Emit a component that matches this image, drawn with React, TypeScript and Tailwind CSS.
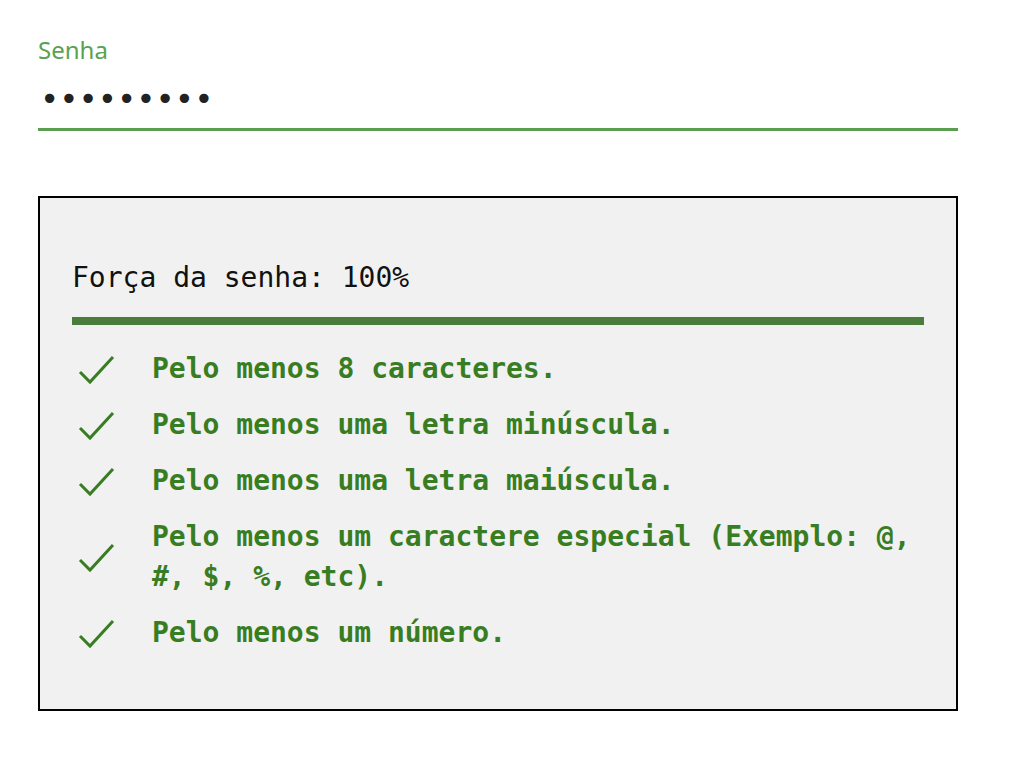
const requirements = [
  'Pelo menos 8 caracteres.',
  'Pelo menos uma letra minúscula.',
  'Pelo menos uma letra maiúscula.',
  'Pelo menos um caractere especial (Exemplo: @, #, $, %, etc).',
  'Pelo menos um número.',
];

function CheckIcon() {
  return (
    <svg width="40" height="40" viewBox="0 0 40 40" fill="none" className="shrink-0">
      <polyline points="4,23 14,33 37,8" stroke="#387d22" strokeWidth="3" />
    </svg>
  );
}

export default function App() {
  return (
    <div className="min-h-screen bg-white">
      <div className="ml-[38px] w-[920px] pt-[34px]">
        <label className="block text-[24px] leading-[32px] text-[#5aa150] font-['Noto_Sans',sans-serif]">
          Senha
        </label>
        <div className="mt-[13px] border-b-[3px] border-[#5a9f4f] pb-[9px] pl-[2px]">
          <span className="block text-[32px] leading-[40px] text-[#222] font-['DejaVu_Sans_Mono',monospace]">
            •••••••••
          </span>
        </div>

        <div className="mt-[65px] border-2 border-black bg-[#f1f1f1] px-[32px] pt-[60px] pb-[56px] font-['DejaVu_Sans_Mono',monospace]">
          <p className="text-[28px] leading-[40px] text-[#111]">Força da senha: 100%</p>
          <div className="mt-[19px] h-[8px] w-full bg-[#4a7c3b]" />
          <ul className="mt-[24px] flex flex-col gap-[16px]">
            {requirements.map((r) => (
              <li key={r} className="flex items-center">
                <div className="ml-[4px] w-[76px]">
                  <CheckIcon />
                </div>
                <span className="flex-1 text-[28px] leading-[40px] font-bold text-[#387d22]">{r}</span>
              </li>
            ))}
          </ul>
        </div>
      </div>
    </div>
  );
}
